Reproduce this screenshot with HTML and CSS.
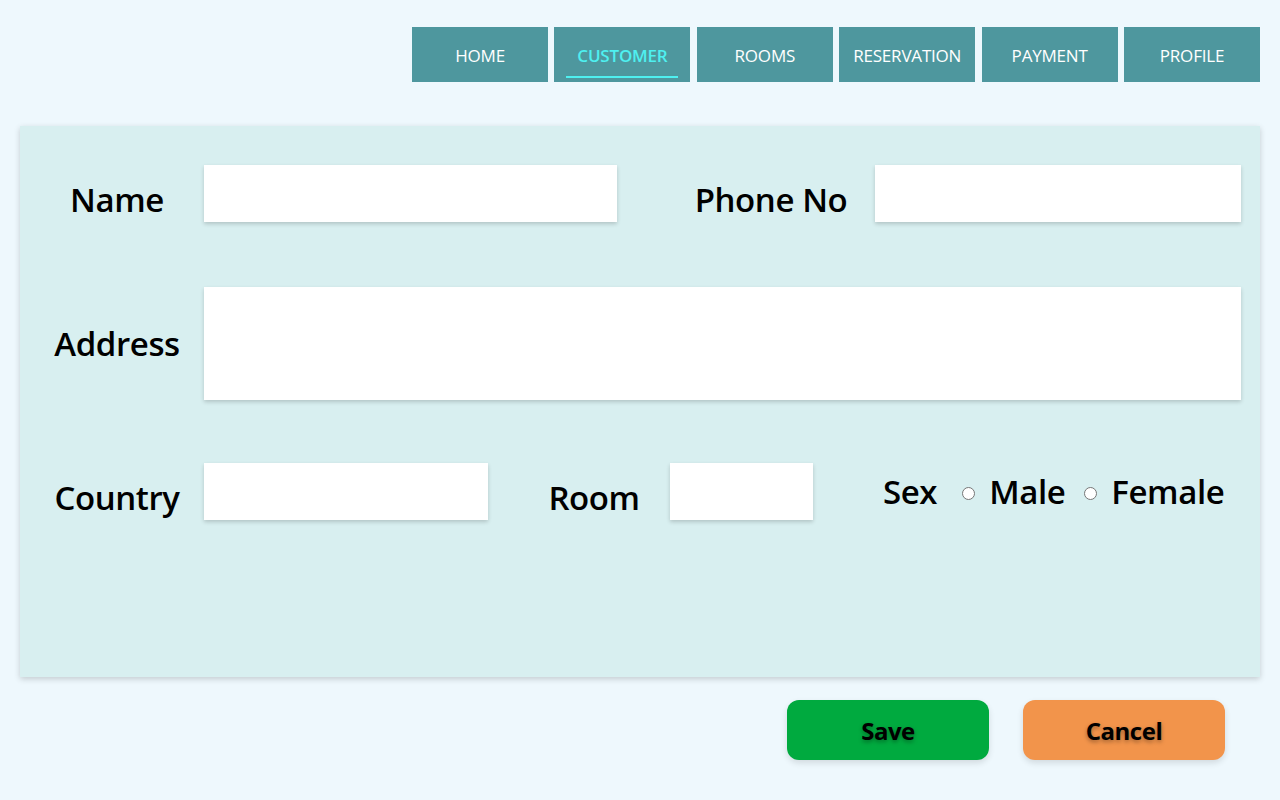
FILE: index.html
```html
<!DOCTYPE html>
<html lang="en">
<head>
<meta charset="utf-8">
<title>Customer</title>
<link rel="stylesheet" href="styles.css">
</head>
<body>
<nav class="nav">
  <a class="nav-item">HOME</a>
  <a class="nav-item active">CUSTOMER</a>
  <a class="nav-item">ROOMS</a>
  <a class="nav-item">RESERVATION</a>
  <a class="nav-item">PAYMENT</a>
  <a class="nav-item">PROFILE</a>
</nav>

<section class="card">
  <div class="row row-1">
    <label class="label label-wide">Name</label>
    <div class="field field-name"></div>
    <label class="label label-wide label-phone">Phone No</label>
    <div class="field field-phone"></div>
  </div>
  <div class="row row-2">
    <label class="label label-wide label-address">Address</label>
    <div class="field field-address"></div>
  </div>
  <div class="row row-3">
    <label class="label label-wide">Country</label>
    <div class="field field-country"></div>
    <label class="label label-room">Room</label>
    <div class="field field-room"></div>
    <div class="sex">
      <span class="sex-label">Sex</span>
      <span class="radio"></span>
      <span class="radio-text">Male</span>
      <span class="radio"></span>
      <span class="radio-text">Female</span>
    </div>
  </div>
</section>

<div class="actions">
  <button class="btn btn-save">Save</button>
  <button class="btn btn-cancel">Cancel</button>
</div>
</body>
</html>
```

FILE: styles.css
```css
* { box-sizing: border-box; }

html, body {
  margin: 0;
  padding: 0;
}

body {
  background: #eef8fd;
  font-family: "Open Sans", "Noto Sans", sans-serif;
  color: #000;
  width: 1280px;
  height: 800px;
  overflow: hidden;
}

.nav {
  display: flex;
  justify-content: flex-end;
  gap: 6.4px;
  padding: 27px 20px 0 0;
}

.nav-item {
  position: relative;
  width: 136px;
  height: 55px;
  background: #4e979e;
  color: #fff;
  font-size: 17px;
  display: flex;
  align-items: center;
  justify-content: center;
  padding-top: 1px;
  letter-spacing: -0.2px;
}

.nav-item.active {
  color: #4ef0f0;
  font-weight: 600;
}

.nav-item.active::after {
  content: "";
  position: absolute;
  left: 12px;
  right: 12px;
  bottom: 4px;
  height: 2px;
  background: #4ef0f0;
}

.card {
  margin: 44px 20px 0 20px;
  height: 551px;
  background: #d8eff0;
  box-shadow: 0 2px 6px rgba(0, 0, 0, 0.18);
  padding: 39px 19px 0 20px;
}

.row {
  display: flex;
  align-items: flex-start;
}

.row-2 { margin-top: 65px; }
.row-3 { margin-top: 63px; }

.label {
  font-size: 33px;
  line-height: 33px;
  font-weight: 600;
  text-align: center;
  white-space: nowrap;
  letter-spacing: -0.4px;
  margin-top: 18px;
}

.label-wide {
  width: 154px;
  margin-right: 10px;
}

.label-address { margin-top: 40px; }

.label-phone {
  margin-left: 77px;
  margin-right: 27px;
}

.label-room {
  width: 120px;
  margin-left: 46px;
  margin-right: 16px;
}

.field {
  background: #fff;
  height: 57px;
  box-shadow: 0 2px 4px rgba(0, 0, 0, 0.18);
}

.field-name { width: 413px; }
.field-phone { width: 366px; }
.field-address { flex: 1; height: 113px; }
.field-country { width: 284px; }
.field-room { width: 143px; }

.sex {
  display: flex;
  align-items: center;
  margin-left: 70px;
  margin-top: 12px;
  font-size: 33px;
  line-height: 33px;
  font-weight: 600;
  letter-spacing: -0.4px;
}

.sex-label { margin-right: 25px; }

.radio {
  width: 13px;
  height: 13px;
  border: 1px solid #767676;
  border-radius: 50%;
  background: #fff;
  margin-right: 14px;
  margin-top: 3px;
}

.radio-text { margin-right: 19px; }
.radio-text:last-child { margin-right: 0; }

.actions {
  display: flex;
  justify-content: flex-end;
  gap: 34px;
  padding: 23px 55px 0 0;
}

.btn {
  width: 202px;
  height: 60px;
  border: none;
  border-radius: 12px;
  font-family: "Open Sans", "Noto Sans", sans-serif;
  font-size: 24px;
  font-weight: 700;
  color: #000;
  text-shadow: 0 2px 4px rgba(0, 0, 0, 0.35);
  box-shadow: 0 3px 6px rgba(0, 0, 0, 0.12);
  letter-spacing: -0.5px;
  padding: 0;
}

.btn-save { background: #00aa3f; }
.btn-cancel { background: #f2944b; }
```
